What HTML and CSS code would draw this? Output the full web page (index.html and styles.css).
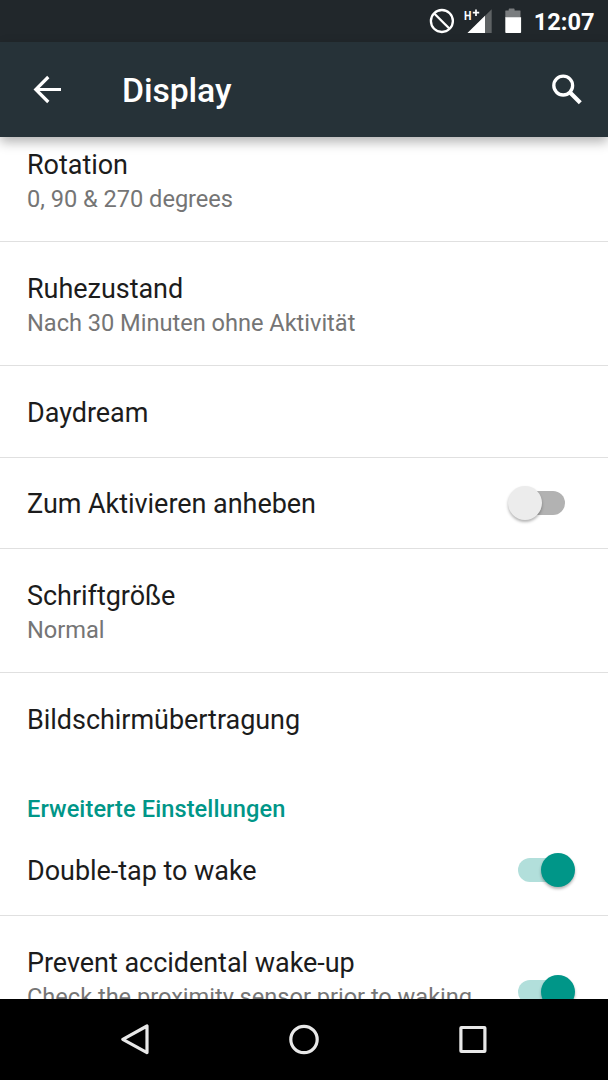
FILE: index.html
```html
<!DOCTYPE html>
<html lang="de">
<head>
<meta charset="utf-8">
<title>Display</title>
<link rel="stylesheet" href="styles.css">
</head>
<body>
<div class="screen">
  <div class="status-bar">
    <svg class="status-icons" width="96" height="42" viewBox="0 0 96 42">
      <g fill="none" stroke="#fff" stroke-width="2.3"><circle cx="13.9" cy="21" r="11"/><path d="M6 13.2 21.800 29"/></g>
      <path d="M63.700 9.300V33H39.500z" fill="#5e6264"/>
      <path d="M57 15.800V33H39.500z" fill="#fff"/>
      <path d="M81.500 8.500h4.300c.5 0 .8.300.8.800v1.200h5.200c.9 0 .7.700.7 1.600V18H77.300v-5.900c0-.9-.2-1.600.7-1.600h2.700V9.300c0-.5.300-.8.800-.8z" fill="#7a7d7f"/>
      <path d="M77.300 17.300h15.800v14.600c0 .7-.4 1.100-1.100 1.100H78.400c-.7 0-1.100-.4-1.100-1.100z" fill="#fff"/>
      <text class="network" transform="translate(36 19.800) scale(.78 1)">H</text>
      <path d="M44.800 12.700h6.400M48 9.500v6.400" stroke="#fff" stroke-width="1.700"/>
    </svg>
    <span class="clock">12:07</span>
  </div>
  <header class="toolbar">
    <svg class="back" width="30" height="30" viewBox="0 0 30 30"><path d="M29 14.500H4M16.300 2 3.800 14.500 16.300 27" fill="none" stroke="#fff" stroke-width="3.200"/></svg>
    <h1 class="title">Display</h1>
    <svg class="search" width="32" height="32" viewBox="0 0 32 32"><g fill="none" stroke="#fff"><circle cx="11.200" cy="11.600" r="9.400" stroke-width="3.300"/><path d="M18.300 18.700 28.300 28.700" stroke-width="4.200"/></g></svg>
  </header>
  <main class="list">
    <div class="row tall first"><div class="text"><div class="name">Rotation</div><div class="summary">0, 90 &amp; 270 degrees</div></div></div>
    <div class="row tall"><div class="text"><div class="name">Ruhezustand</div><div class="summary">Nach 30 Minuten ohne Aktivität</div></div></div>
    <div class="row"><div class="name">Daydream</div></div>
    <div class="row short"><div class="name">Zum Aktivieren anheben</div><div class="switch"><div class="thumb"></div></div></div>
    <div class="row tall"><div class="text"><div class="name">Schriftgröße</div><div class="summary">Normal</div></div></div>
    <div class="row last"><div class="name">Bildschirmübertragung</div></div>
    <h2 class="section">Erweiterte Einstellungen</h2>
    <div class="row short"><div class="name">Double-tap to wake</div><div class="switch on"><div class="thumb"></div></div></div>
    <div class="row tall double"><div class="text"><div class="name">Prevent accidental wake-up</div><div class="summary">Check the proximity sensor prior to waking</div></div><div class="switch on"><div class="thumb"></div></div></div>
  </main>
  <nav class="nav-bar">
    <svg width="32" height="34" viewBox="0 0 32 34"><path d="M28 3V29.600L3.800 16.300z"/></svg>
    <svg width="32" height="34" viewBox="0 0 32 34"><circle cx="16" cy="16.500" r="13.200"/></svg>
    <svg width="32" height="34" viewBox="0 0 32 34"><rect x="3.900" y="4.500" width="24" height="24" rx=".5"/></svg>
  </nav>
</div>
</body>
</html>
```
FILE: styles.css
```css
body {
  margin: 0;
  font-family: Roboto, sans-serif;
}

.screen {
  display: flex;
  flex-direction: column;
  width: 608px;
  height: 1080px;
  overflow: hidden;
  background: #fff;
}

.status-bar {
  display: flex;
  flex: none;
  justify-content: flex-end;
  align-items: center;
  gap: 10px;
  box-sizing: border-box;
  height: 42px;
  padding-right: 13.500px;
  background: #21272b;
  color: #fff;
}

.network {
  fill: #fff;
  font-size: 13.500px;
  font-weight: 700;
}

.clock {
  font-size: 23.640px;
  font-weight: 700;
  line-height: 42px;
  padding-top: 2px;
}

.toolbar {
  position: relative;
  z-index: 1;
  display: flex;
  flex: none;
  align-items: center;
  box-sizing: border-box;
  height: 95px;
  padding: 0 24px 0 32px;
  background: #263238;
  box-shadow: 0 5px 11px rgba(0, 0, 0, .3);
  color: #fff;
}

.title {
  flex: 1;
  margin: 3px 0 0 60px;
  font-size: 33.780px;
  font-weight: 500;
  line-height: 40px;
  letter-spacing: -.1px;
}

.list {
  flex: 1;
  min-height: 0;
  overflow: hidden;
}

.row {
  display: flex;
  align-items: center;
  justify-content: space-between;
  box-sizing: border-box;
  height: 92px;
  padding: 0 33px 0 27px;
  border-bottom: 1px solid #e0e0e0;
}

.short {
  height: 91px;
}

.tall {
  align-items: flex-start;
  height: 124px;
  padding-top: 30px;
}

.first {
  margin-top: -19px;
}

.last {
  border-bottom: 0;
}

.name {
  padding-top: 2px;
  color: #1c1c1c;
  font-size: 27px;
  line-height: 32px;
  letter-spacing: -.04px;
}

.text .name {
  padding-top: 1px;
}

.summary {
  margin-top: -1px;
  color: #757575;
  font-size: 23.640px;
  line-height: 38px;
  letter-spacing: -.03px;
  white-space: nowrap;
}

.section {
  margin: 0;
  padding: 27px 27px 0;
  height: 33px;
  color: #009688;
  font-size: 23.640px;
  font-weight: 500;
  line-height: 34px;
  letter-spacing: .07px;
}

.switch {
  display: flex;
  align-items: center;
  box-sizing: border-box;
  width: 47px;
  height: 24px;
  margin-right: 10px;
  border-radius: 12px;
  background: #b2b2b2;
}

.thumb {
  flex: none;
  width: 34px;
  height: 34px;
  margin-left: -10px;
  border-radius: 50%;
  background: #ececec;
  box-shadow: 0 2px 3px rgba(0, 0, 0, .3);
}

.on {
  justify-content: flex-end;
  background: #b2dfdb;
}

.on .thumb {
  margin-right: -10px;
  background: #009688;
}

.double .switch {
  margin-top: 34px;
}

.nav-bar {
  display: flex;
  flex: none;
  justify-content: center;
  align-items: center;
  gap: 137px;
  height: 81px;
  background: #000;
}

.nav-bar svg {
  fill: none;
  stroke: #e8e8e8;
  stroke-width: 3.200;
  stroke-linejoin: round;
}
```
